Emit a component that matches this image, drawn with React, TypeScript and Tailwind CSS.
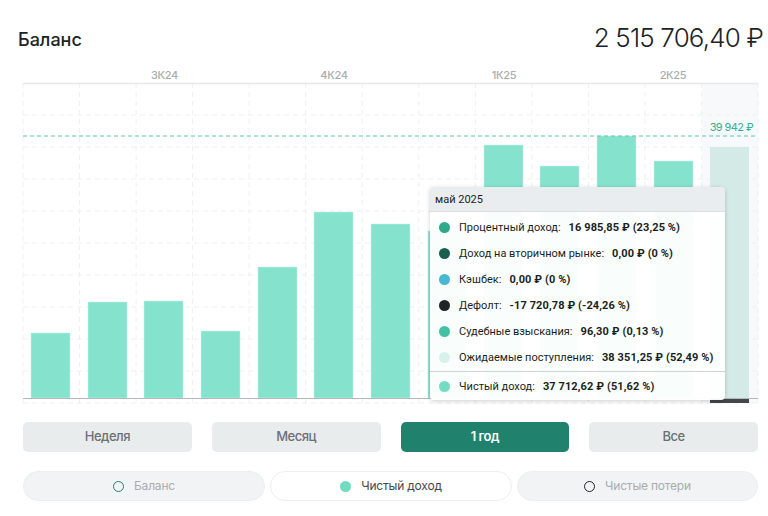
const columns = Array.from({ length: 14 }, (_, i) => 23 + i * 56.54);
const rows = Array.from({ length: 10 }, (_, i) => 115 + i * 32);

const bars = [
  { x: 31, top: 333 },
  { x: 88, top: 302 },
  { x: 144, top: 301 },
  { x: 201, top: 331 },
  { x: 258, top: 267 },
  { x: 314, top: 212 },
  { x: 371, top: 224 },
  { x: 428, top: 231 },
  { x: 484, top: 145 },
  { x: 540, top: 166 },
  { x: 597, top: 136 },
  { x: 654, top: 161 },
];

const quarters = [
  { x: 164.5, label: "3К24" },
  { x: 334, label: "4К24" },
  { x: 504, label: "1К25" },
  { x: 673, label: "2К25" },
];

const tooltipRows = [
  { color: "bg-[#2fa98c]", label: "Процентный доход:", value: "16 985,85 ₽ (23,25 %)" },
  { color: "bg-[#1b5e50]", label: "Доход на вторичном рынке:", value: "0,00 ₽ (0 %)" },
  { color: "bg-[#49b8d3]", label: "Кэшбек:", value: "0,00 ₽ (0 %)" },
  { color: "bg-[#202325]", label: "Дефолт:", value: "-17 720,78 ₽ (-24,26 %)" },
  { color: "bg-[#45c0a5]", label: "Судебные взыскания:", value: "96,30 ₽ (0,13 %)" },
  { color: "bg-[#d9f1eb]", label: "Ожидаемые поступления:", value: "38 351,25 ₽ (52,49 %)" },
];

const periods = ["Неделя", "Месяц", "1 год", "Все"];

function Chart() {
  return (
    <svg width="768" height="350" viewBox="0 60 768 350" className="block">
      <rect x="702" y="83" width="56" height="320" fill="#f8f9fb" />
      {columns.map((x) => (
        <line key={x} x1={x} x2={x} y1="83" y2="403" stroke="#eef0f1" strokeWidth="1" strokeDasharray="5 4" />
      ))}
      {rows.map((y) => (
        <line key={y} x1="23" x2="758" y1={y} y2={y} stroke="#eef0f1" strokeWidth="1" strokeDasharray="5 4" />
      ))}
      <line x1="23" x2="758" y1="83.5" y2="83.5" stroke="#e6e7e8" strokeWidth="1.5" />
      {quarters.map((q) => (
        <text key={q.label} x={q.x} y="79" textAnchor="middle" fontSize="11" fontWeight="500" letterSpacing="-0.3" fill="#a9adb0">
          {q.label}
        </text>
      ))}
      {bars.map((b) => (
        <rect key={b.x} x={b.x} y={b.top} width="39" height={398 - b.top} fill="#85e2cc" stroke="#c6f1e6" strokeWidth="0.5" />
      ))}
      <rect x="710" y="147" width="39" height="252" fill="#d3eae6" />
      <rect x="710" y="399" width="39" height="4" fill="#444648" />
      <line x1="23" x2="758" y1="398.5" y2="398.5" stroke="#b4b8bc" strokeWidth="1" />
      <line x1="23" x2="758" y1="136" y2="136" stroke="#52c9ad" strokeWidth="1" strokeDasharray="4 3" />
      <text x="753" y="131" textAnchor="end" fontSize="11" letterSpacing="-0.6" fill="#33b095">
        39 942 ₽
      </text>
    </svg>
  );
}

function Tooltip() {
  return (
    <div className="absolute left-[430px] top-[127px] w-[295px] rounded-[4px] bg-white/95 shadow-[0_1px_4px_rgba(0,0,0,0.2)] font-['Roboto',sans-serif] text-[11px] text-[#1c1f21]">
      <div className="flex h-[25px] items-center rounded-t-[4px] border-b border-[#dcdfe1] bg-[#eaedef] pl-[5px] pt-[2px]">май 2025</div>
      <div className="flex flex-col pt-[2px]">
        {tooltipRows.map((r) => (
          <div key={r.label} className="flex h-[26px] items-center pl-[9px]">
            <span className={`mr-[10px] h-[11px] w-[11px] shrink-0 rounded-full ${r.color}`} />
            <div className="-ml-px pt-[2px]">
              <span className="mr-2">{r.label}</span>
              <b className="font-bold tracking-[0.1px]">{r.value}</b>
            </div>
          </div>
        ))}
      </div>
      <div className="mt-[1px] flex h-[29px] items-center border-t border-[#cfd3d5] pl-[9px]">
        <span className="mr-[10px] h-[11px] w-[11px] shrink-0 rounded-full bg-[#74dcc3]" />
        <div className="-ml-px pt-[2px]">
          <span className="mr-2">Чистый доход:</span>
          <b className="font-bold tracking-[0.1px]">37 712,62 ₽ (51,62 %)</b>
        </div>
      </div>
    </div>
  );
}

export default function App() {
  return (
    <div className="h-[516px] w-[768px] overflow-hidden bg-white font-['Inter',sans-serif]">
      <div className="flex h-[60px] items-end justify-between pl-[18px] pr-[5px]">
        <h1 className="mb-[9px] text-[18px] font-medium leading-[22px] text-[#202325]">Баланс</h1>
        <div className="mb-[6px] text-[26px] font-light leading-[32px] tracking-[-0.85px] text-[#202325]">2 515 706,40 ₽</div>
      </div>
      <div className="relative h-[350px]">
        <Chart />
        <Tooltip />
      </div>
      <div className="mt-[12px] grid grid-cols-4 gap-5 pl-[23px] pr-[10px]">
        {periods.map((p) => (
          <button
            key={p}
            className={
              p === "1 год"
                ? "h-[30px] rounded-[5px] bg-[#20826c] text-[13px] font-semibold tracking-[-0.5px] text-white"
                : "h-[30px] rounded-[5px] bg-[#e9eced] text-[13px] font-medium tracking-[-0.5px] text-[#6b7075]"
            }
          >
            {p}
          </button>
        ))}
      </div>
      <div className="mt-[19px] flex gap-[5px] pl-[23px] pr-[10px] text-[12px] tracking-[-0.2px]">
        <div className="flex h-[30px] w-[242px] items-center justify-center gap-[10px] rounded-[15px] border border-[#eceef0] bg-[#f1f3f5] text-[#a9adb0]">
          <span className="h-[11px] w-[11px] rounded-full border-[1.5px] border-[#20826c]" />
          Баланс
        </div>
        <div className="flex h-[30px] w-[242px] items-center justify-center gap-[10px] rounded-[15px] border border-[#eceef0] bg-white text-[#44484c]">
          <span className="h-[11px] w-[11px] rounded-full bg-[#6fdcc0]" />
          Чистый доход
        </div>
        <div className="flex h-[30px] w-[241px] items-center justify-center gap-[10px] rounded-[15px] border border-[#eceef0] bg-[#f1f3f5] text-[#a9adb0]">
          <span className="h-[11px] w-[11px] rounded-full border-[1.5px] border-[#202325]" />
          Чистые потери
        </div>
      </div>
    </div>
  );
}
